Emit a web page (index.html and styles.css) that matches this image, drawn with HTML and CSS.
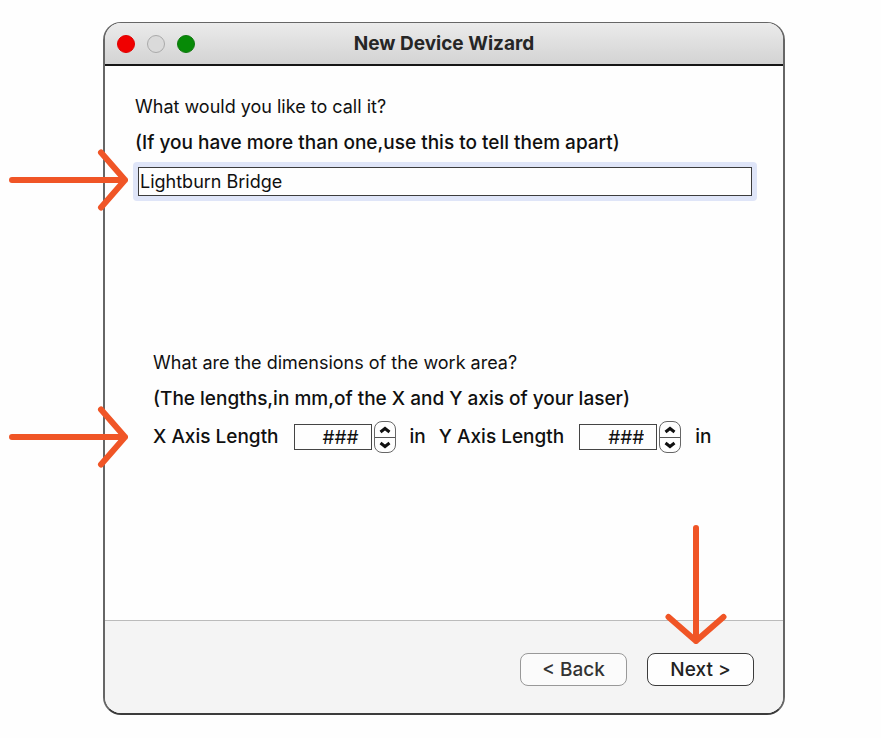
FILE: index.html
```html
<!DOCTYPE html>
<html lang="en">
<head>
<meta charset="utf-8">
<title>New Device Wizard</title>
<link rel="stylesheet" href="styles.css">
</head>
<body>
<main class="window">
  <header class="titlebar">
    <div class="lights">
      <button class="light light-close" type="button" aria-label="Close"></button>
      <button class="light light-minimize" type="button" aria-label="Minimize"></button>
      <button class="light light-zoom" type="button" aria-label="Zoom"></button>
    </div>
    <h1 class="title">New Device Wizard</h1>
  </header>
  <form class="content">
    <section class="name-section">
      <label class="line" for="device-name">What would you like to call it?</label>
      <p class="line hint">(If you have more than one,use this to tell them apart)</p>
      <div class="name-field">
        <input class="name-input" id="device-name" type="text" value="Lightburn Bridge">
        <svg class="arrow arrow-name" width="120" height="62" viewBox="0 0 120 62" aria-hidden="true"><path d="M3 31H116M92 3.500L116 31L92 58.500"/></svg>
      </div>
    </section>
    <section class="size-section">
      <h2 class="line">What are the dimensions of the work area?</h2>
      <p class="line hint">(The lengths,in mm,of the X and Y axis of your laser)</p>
      <div class="axes">
        <label class="axis-label" for="x-axis">X Axis Length</label>
        <div class="spin">
          <input class="spin-input" id="x-axis" type="text" value="###">
          <div class="stepper">
            <button class="step" type="button" aria-label="Increase X"><svg width="14" height="8" viewBox="0 0 14 8"><path d="M2.500 6L7 2.500L11.500 6"/></svg></button>
            <button class="step" type="button" aria-label="Decrease X"><svg width="14" height="8" viewBox="0 0 14 8"><path d="M2.500 2L7 5.500L11.500 2"/></svg></button>
          </div>
        </div>
        <span class="unit">in</span>
        <label class="axis-label" for="y-axis">Y Axis Length</label>
        <div class="spin">
          <input class="spin-input" id="y-axis" type="text" value="###">
          <div class="stepper">
            <button class="step" type="button" aria-label="Increase Y"><svg width="14" height="8" viewBox="0 0 14 8"><path d="M2.500 6L7 2.500L11.500 6"/></svg></button>
            <button class="step" type="button" aria-label="Decrease Y"><svg width="14" height="8" viewBox="0 0 14 8"><path d="M2.500 2L7 5.500L11.500 2"/></svg></button>
          </div>
        </div>
        <span class="unit">in</span>
        <svg class="arrow arrow-axes" width="120" height="62" viewBox="0 0 120 62" aria-hidden="true"><path d="M3 31H116M92 3.500L116 31L92 58.500"/></svg>
      </div>
    </section>
  </form>
  <footer class="footer">
    <button class="button" type="button">&lt; Back</button>
    <div class="next-wrap">
      <button class="button button-default" type="button">Next &gt;</button>
      <svg class="arrow arrow-next" width="62" height="120" viewBox="0 0 62 120" aria-hidden="true"><path d="M31 3V116M3.500 92L31 116L58.500 92"/></svg>
    </div>
  </footer>
</main>
</body>
</html>
```

FILE: styles.css
```css
* {
  box-sizing: border-box;
}

body {
  margin: 0;
  background: #fefefe;
  color: #101010;
  font-family: Inter, "Liberation Sans", sans-serif;
  font-size: 19px;
  font-weight: 500;
  line-height: 24px;
}

input,
button {
  font: inherit;
  color: inherit;
  margin: 0;
  padding: 0;
}

.window {
  margin: 22px 96px 24px 103px;
  border: 2px solid #666;
  border-top-width: 1px;
  border-bottom-color: #3c3c3c;
  border-radius: 18px;
  background: #fefefe;
}

.titlebar {
  display: grid;
  grid-template-columns: 1fr auto 1fr;
  align-items: center;
  height: 43px;
  border-bottom: 2px solid #161616;
  border-radius: 16px 16px 0 0;
  background: linear-gradient(#ebebeb, #d3d3d3);
}

.lights {
  display: flex;
  gap: 12px;
  padding-left: 12px;
}

.light {
  width: 18px;
  height: 18px;
  border: 1px solid #e00000;
  border-radius: 50%;
  background: #f00000;
}

.light-minimize {
  border-color: #aaa;
  background: #dadada;
}

.light-zoom {
  border-color: #107810;
  background: #078a07;
}

.title {
  margin: 0;
  font-size: 19px;
  font-weight: 700;
  color: #262626;
}

.content {
  padding: 29px 26px 167px 28px;
}

.line {
  display: block;
  margin: 0 2px 12px;
  font-size: 18px;
  font-weight: 400;
}

.hint {
  margin-bottom: 10px;
  font-size: 19px;
  font-weight: 500;
}

.name-section .hint {
  margin-bottom: 7px;
}

.name-field {
  position: relative;
  padding: 5px;
  border-radius: 4px;
  background: #dfe5f8;
}

.name-input {
  display: block;
  width: 100%;
  height: 29px;
  padding-left: 1px;
  border: 1px solid #3c3c3c;
  border-radius: 0;
  outline: 0;
  background: #fefefe;
  font-size: 18px;
  font-weight: 400;
}

.size-section {
  padding: 150px 0 0 18px;
}

.axes {
  position: relative;
  display: flex;
  align-items: center;
  padding-left: 2px;
}

.spin {
  display: flex;
  align-items: center;
  gap: 2px;
  margin: 0 14px 0 15px;
}

.spin-input {
  width: 78px;
  height: 26px;
  padding-right: 12px;
  border: 1px solid #444;
  border-radius: 0;
  outline: 0;
  background: #fefefe;
  font-weight: 400;
  text-align: right;
}

.stepper {
  width: 22px;
  height: 32px;
  border: 1px solid #666;
  border-radius: 8px;
  overflow: hidden;
}

.step {
  display: flex;
  align-items: center;
  justify-content: center;
  width: 100%;
  height: 15px;
  border: 0;
  background: transparent;
}

.step + .step {
  border-top: 1px solid #555;
}

.step path {
  fill: none;
  stroke: #101010;
  stroke-width: 3;
}

.unit + .axis-label {
  margin-left: 13px;
}

.footer {
  display: flex;
  justify-content: flex-end;
  gap: 20px;
  padding: 32px 29px 27px;
  border-top: 1px solid #bbb;
  border-radius: 0 0 16px 16px;
  background: #f4f4f4;
}

.next-wrap {
  position: relative;
}

.button {
  display: block;
  width: 107px;
  height: 33px;
  border: 1px solid #999;
  border-radius: 8px;
  background: #fbfbfb;
  color: #333;
}

.button-default {
  border-color: #3c3c3c;
  background: #fefefe;
  color: #222;
}

.arrow {
  position: absolute;
  fill: none;
  stroke: #f05526;
  stroke-width: 6;
  stroke-linecap: round;
  stroke-linejoin: round;
}

.arrow-name {
  right: 100%;
  top: -13px;
  margin-right: 4px;
}

.arrow-axes {
  top: -15px;
  left: -142px;
}

.arrow-next {
  bottom: 100%;
  left: 18px;
  margin-bottom: 8px;
}
```
